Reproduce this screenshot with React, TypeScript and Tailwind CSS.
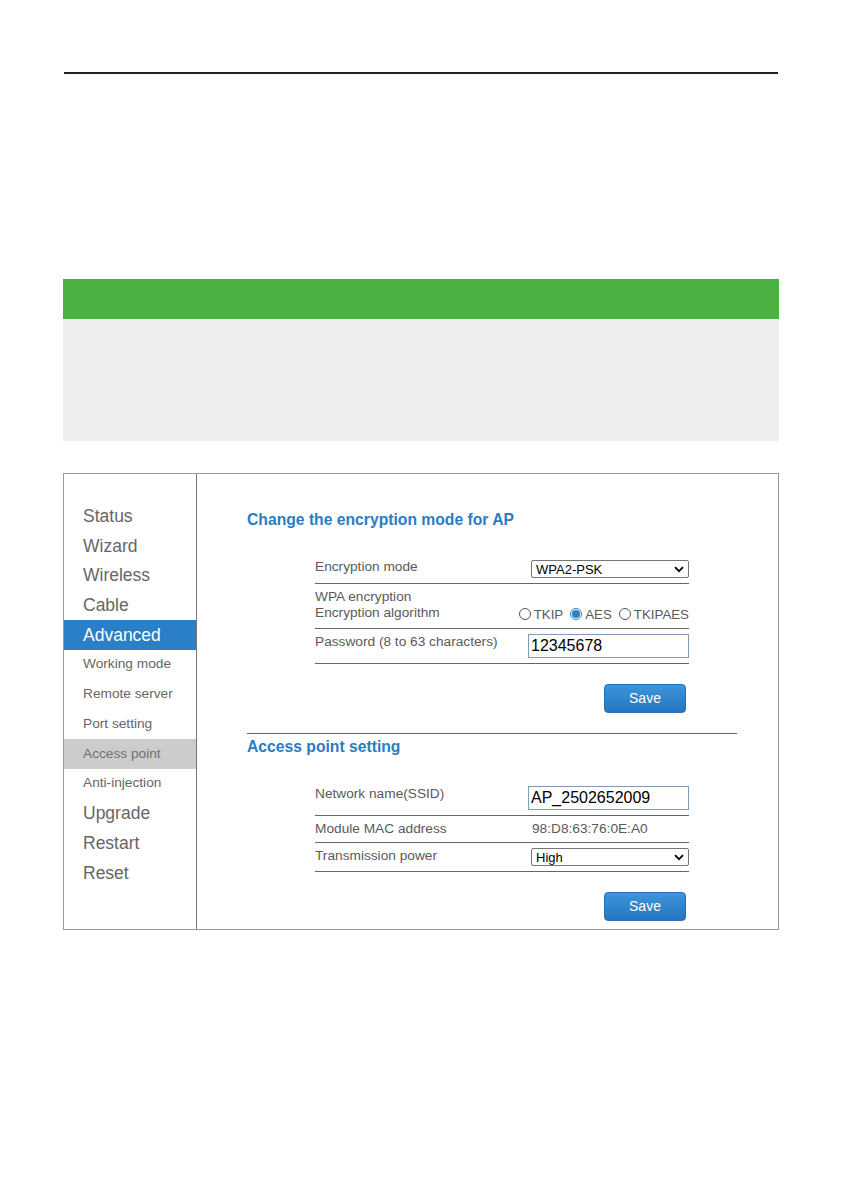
import React from "react";

const font = { fontFamily: '"Liberation Sans", Arial, sans-serif' };

function Chevron() {
  return (
    <svg width="10" height="7" viewBox="0 0 10 7" className="shrink-0">
      <path d="M1 1.2 L5 5.2 L9 1.2" fill="none" stroke="#000" strokeWidth="1.8" />
    </svg>
  );
}

function Select({ value }: { value: string }) {
  return (
    <div className="flex h-[18px] w-[158px] items-center justify-between rounded-[2px] border border-[#767676] bg-white pl-[4px] pr-[4px] text-[13px] leading-none text-black">
      <span>{value}</span>
      <Chevron />
    </div>
  );
}

function TextInput({ value }: { value: string }) {
  return (
    <div className="flex h-[24px] w-[161px] items-center border border-[#7f9db9] bg-white pl-[2px] text-[16px] leading-none text-black">
      {value}
    </div>
  );
}

function Radio({ checked }: { checked?: boolean }) {
  return (
    <span
      className={
        "mr-[3px] inline-flex h-[12px] w-[12px] items-center justify-center rounded-full border bg-white " +
        (checked ? "border-[#2a7fc7]" : "border-[#555]")
      }
    >
      {checked && <span className="h-[8px] w-[8px] rounded-full bg-[#2a7fc7]" />}
    </span>
  );
}

function SaveButton() {
  return (
    <div className="flex justify-end pr-[3px]">
      <div className="flex h-[29px] w-[82px] items-center justify-center rounded-[4px] border border-[#2a6fb0] bg-gradient-to-b from-[#3d95dc] to-[#2575bd] text-[14px] text-white">
        Save
      </div>
    </div>
  );
}

const sideItems: { label: string; big: boolean; state?: "active" | "current" }[] = [
  { label: "Status", big: true },
  { label: "Wizard", big: true },
  { label: "Wireless", big: true },
  { label: "Cable", big: true },
  { label: "Advanced", big: true, state: "active" },
  { label: "Working mode", big: false },
  { label: "Remote server", big: false },
  { label: "Port setting", big: false },
  { label: "Access point", big: false, state: "current" },
  { label: "Anti-injection", big: false },
  { label: "Upgrade", big: true },
  { label: "Restart", big: true },
  { label: "Reset", big: true },
];

export default function App() {
  return (
    <div className="min-h-[1192px] w-full bg-white" style={font}>
      <div className="ml-[63px] w-[716px] pt-[72px]">
        <div className="mx-[1px] h-[2px] bg-[#231f20]" />
        <div className="mt-[205px] h-[40px] bg-[#4bb140]" />
        <div className="h-[122px] bg-[#eeeeee]" />

        <div className="mt-[32px] flex h-[457px] border border-[#999999]">
          {/* sidebar */}
          <div className="w-[133px] shrink-0 border-r border-[#777] pt-[27px]">
            {sideItems.map((it) => (
              <div
                key={it.label}
                className={
                  "flex h-[29.75px] items-center pl-[19px] " +
                  (it.state === "active"
                    ? "bg-[#2a7fc7] text-white "
                    : it.state === "current"
                    ? "bg-[#cccccc] text-[#707070] "
                    : "text-[#666666] ") +
                  (it.big ? "text-[17.5px]" : "text-[13.7px]")
                }
              >
                {it.label}
              </div>
            ))}
          </div>

          {/* content */}
          <div className="flex-1 pl-[50px] pt-[37px]">
            <div className="w-[490px]">
              <div className="h-[18px] text-[15.7px] font-bold leading-[18px] text-[#2b7cc4]">
                Change the encryption mode for AP
              </div>

              <div className="ml-[68px] mt-[27px] w-[374px] text-[13.7px] text-[#5a5a5a]">
                <div className="flex h-[28px] justify-between border-b border-[#666]">
                  <div className="pt-[3px] leading-[16px]">Encryption mode</div>
                  <div className="pt-[4px]">
                    <Select value="WPA2-PSK" />
                  </div>
                </div>
                <div className="flex h-[45px] justify-between border-b border-[#666]">
                  <div className="pt-[5px] leading-[16px]">
                    <div>WPA encryption</div>
                    <div>Encryption algorithm</div>
                  </div>
                  <div className="flex items-center self-end pb-[7px] text-[13.3px] leading-none text-[#5a5a5a]">
                    <Radio />
                    <span className="mr-[7px]">TKIP</span>
                    <Radio checked />
                    <span className="mr-[7px]">AES</span>
                    <Radio />
                    <span>TKIPAES</span>
                  </div>
                </div>
                <div className="flex h-[35px] justify-between border-b border-[#666]">
                  <div className="pt-[5px] leading-[16px]">Password (8 to 63 characters)</div>
                  <div className="pt-[5px]">
                    <TextInput value="12345678" />
                  </div>
                </div>
                <div className="mt-[20px]">
                  <SaveButton />
                </div>
              </div>

              <div className="mt-[20px] h-px bg-[#666]" />

              <div className="mt-[4px] h-[18px] text-[15.7px] font-bold leading-[18px] text-[#2b7cc4]">
                Access point setting
              </div>

              <div className="ml-[68px] mt-[25px] w-[374px] text-[13.7px] text-[#5a5a5a]">
                <div className="flex h-[35px] justify-between border-b border-[#666]">
                  <div className="pt-[5px] leading-[16px]">Network name(SSID)</div>
                  <div className="pt-[5px]">
                    <TextInput value="AP_2502652009" />
                  </div>
                </div>
                <div className="flex h-[27px] justify-between border-b border-[#666]">
                  <div className="pt-[5px] leading-[16px]">Module MAC address</div>
                  <div className="w-[157px] pt-[5px] leading-[16px]">98:D8:63:76:0E:A0</div>
                </div>
                <div className="flex h-[29px] justify-between border-b border-[#666]">
                  <div className="pt-[5px] leading-[16px]">Transmission power</div>
                  <div className="pt-[5px]">
                    <Select value="High" />
                  </div>
                </div>
                <div className="mt-[20px]">
                  <SaveButton />
                </div>
              </div>
            </div>
          </div>
        </div>
      </div>
    </div>
  );
}
